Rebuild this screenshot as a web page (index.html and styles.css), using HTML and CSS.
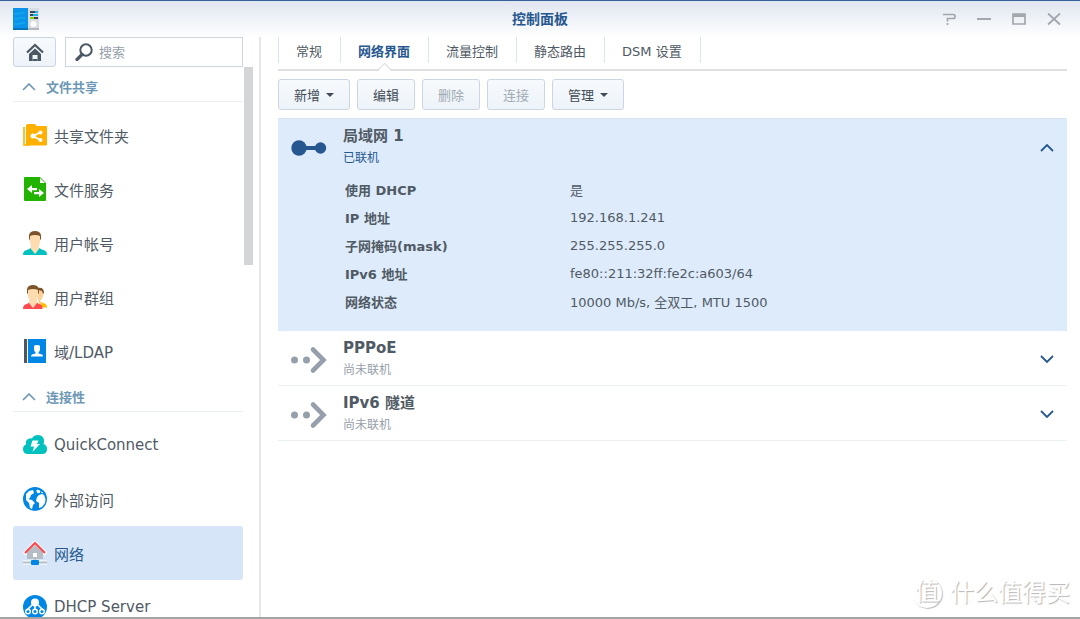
FILE: index.html
```html
<!DOCTYPE html>
<html lang="zh-CN">

<head>
    <meta charset="UTF-8">
    <meta name="viewport" content="width=device-width, initial-scale=1.0">
    <title>控制面板</title>
    <link rel="stylesheet" href="styles.css">
</head>

<body>
    <div class="window">
        <header class="titlebar">
            <svg class="app-icon" width="26" height="22" viewBox="0 0 26 22">
                <rect x="13" y="0" width="13" height="22" fill="#d9dde1" />
                <rect x="15" y="20" width="11" height="2" fill="#b3b9be" />
                <rect x="0" y="0" width="15" height="22" fill="#0a93e8" />
                <rect x="0" y="20" width="15" height="2" fill="#0675bd" />
                <path d="M1 6h4l1-1h6M1 11h4l1-1h6M1 16h5l1-1h5" fill="none" stroke="#12b4f0" />
                <path d="M17 4h5M17 7h3M21 10h4" stroke="#3c464f" stroke-width="2" />
                <path d="M22 4h3M20 7h5" stroke="#18b5ea" stroke-width="2" />
                <path d="M17 10h4" stroke="#7bd500" stroke-width="2" />
                <circle cx="20.500" cy="16" r="3" fill="#fff" />
            </svg>
            <h1 class="window-title">控制面板</h1>
            <div class="window-btns">
                <button type="button" aria-label="帮助">
                    <svg width="14" height="14" viewBox="0 0 14 14">
                        <path d="M1 2.500h10q2 0 2 1.500v1q0 1.500-2 1.500H5.500v3M5.500 11v2" fill="none" stroke="#a2a7ae" stroke-width="1.700" />
                    </svg>
                </button>
                <button type="button" aria-label="最小化">
                    <svg width="14" height="14" viewBox="0 0 14 14">
                        <path d="M0 7h14" stroke="#a2a7ae" stroke-width="2" />
                    </svg>
                </button>
                <button type="button" aria-label="最大化">
                    <svg width="14" height="14" viewBox="0 0 14 14">
                        <path d="M1 2h12v10H1z" fill="none" stroke="#a2a7ae" stroke-width="1.700" />
                        <path d="M1 3.500h12" stroke="#a2a7ae" stroke-width="3" />
                    </svg>
                </button>
                <button type="button" aria-label="关闭">
                    <svg width="14" height="14" viewBox="0 0 14 14">
                        <path d="M1 1.500l12 11M13 1.500l-12 11" stroke="#a2a7ae" stroke-width="1.700" />
                    </svg>
                </button>
            </div>
        </header>

        <div class="main">
            <aside class="sidebar">
                <div class="search-row">
                    <button type="button" class="home-btn" aria-label="主页">
                        <svg width="18" height="18" viewBox="0 0 18 18">
                            <path d="M1 9.500L9 2l8 7.500" fill="none" stroke="#4b5763" stroke-width="2.200" />
                            <path d="M3 11l6-5.600L15 11v7h-3.500v-6h-5v6H3z" fill="#4b5763" />
                            <path d="M6.500 17h5" stroke="#4b5763" stroke-width="2" />
                        </svg>
                    </button>
                    <div class="search-box">
                        <label for="search" aria-label="搜索">
                            <svg width="18" height="18" viewBox="0 0 18 18">
                                <circle cx="11" cy="7" r="5.700" fill="none" stroke="#4b5763" stroke-width="2" />
                                <path d="M7 11.500L2 16.500" stroke="#4b5763" stroke-width="3.200" stroke-linecap="round" />
                            </svg>
                        </label>
                        <input type="text" id="search" placeholder="搜索">
                    </div>
                </div>

                <div class="nav-scroll">
                    <nav class="nav-list">
                        <div class="nav-group">
                            <h2 class="nav-title">
                                <svg width="14" height="8" viewBox="0 0 14 8">
                                    <path d="M1 7l6-6 6 6" fill="none" stroke="#6d97b5" stroke-width="1.600" />
                                </svg>
                                文件共享
                            </h2>
                            <a href="#" class="nav-item">
                                <svg width="24" height="24" viewBox="0 0 24 24">
                                    <path d="M1 4v18h5" fill="none" stroke="#ffb000" stroke-width="1.600" />
                                    <path d="M3 2.500l1-1.500h8l1.500 2H23q1 0 1 1v17.500q0 1-1 1H3z" fill="#ffb000" />
                                    <path d="M18 9l-8 4 8 4.500" fill="none" stroke="#fff" stroke-width="1.600" />
                                    <g fill="#fff">
                                        <circle cx="10" cy="13" r="2.500" />
                                        <circle cx="17.500" cy="9.500" r="2" />
                                        <circle cx="17.500" cy="17" r="2" />
                                    </g>
                                </svg>
                                共享文件夹
                            </a>
                            <a href="#" class="nav-item">
                                <svg width="24" height="24" viewBox="0 0 24 24">
                                    <path d="M2 0h15l6 6v17q0 1-1 1H2q-1 0-1-1V1q0-1 1-1z" fill="#22b400" />
                                    <path d="M17 1v5h5z" fill="#fff" />
                                    <path d="M4 12l5-4v3h5v2.200H9V16zM21 16l-5-4v3h-5v2.200h5V20z" fill="#fff" />
                                </svg>
                                文件服务
                            </a>
                            <a href="#" class="nav-item">
                                <svg width="24" height="24" viewBox="0 0 24 24">
                                    <path d="M0 24q0-4.500 4-5l4-2h8l4 2q4 .500 4 5z" fill="#00c1c1" />
                                    <path d="M8 13h8v5l-4 5-4-5z" fill="#ffdcb0" />
                                    <path d="M6.500 5q-.500 11 5.500 11T17.500 5l-3-2h-5z" fill="#ffdcb0" />
                                    <path d="M6 9V4q1-4 6-4t6 4v5l-1-1V5q-5-2-10 0v3z" fill="#7d532b" />
                                </svg>
                                用户帐号
                            </a>
                            <a href="#" class="nav-item">
                                <svg width="24" height="24" viewBox="0 0 24 24">
                                    <path d="M16 22.500V16l4 2q4 .500 4 4.500z" fill="#ffbc00" />
                                    <path d="M14 4q6-1 6.500 3-.500 8-4.500 9.500l3 2-3 3z" fill="#ffd097" />
                                    <path d="M15 3q6-1 6 5l-1 1-1-3-4-1z" fill="#7d532b" />
                                    <path d="M0 24q0-4.500 4-5l3-2h6l3 2q3.500.500 3.500 5z" fill="#fb4a50" />
                                    <path d="M6 13h8v5l-4 5-4-5z" fill="#ffdcb0" />
                                    <path d="M4.500 5q-.500 11 5.500 11T15.500 5l-3-2h-5z" fill="#ffdcb0" />
                                    <path d="M4 9V4q1-4 6-4t6 4v5l-1-1V5Q10 3 5 5v3z" fill="#7d532b" />
                                </svg>
                                用户群组
                            </a>
                            <a href="#" class="nav-item">
                                <svg width="24" height="24" viewBox="0 0 24 24">
                                    <path d="M1 0h3v24H1z" fill="#4b5763" />
                                    <path d="M5 0h18v24H5z" fill="#0086e5" />
                                    <path d="M11 7q.500-1 3-1t3 1v3q0 2.500-1.500 3.500v1l3.500 1q1 .500 1 2H8q0-1.500 1-2l3.500-1v-1Q11 12.500 11 10z" fill="#fff" />
                                </svg>
                                域/LDAP
                            </a>
                        </div>

                        <div class="nav-group">
                            <h2 class="nav-title">
                                <svg width="14" height="8" viewBox="0 0 14 8">
                                    <path d="M1 7l6-6 6 6" fill="none" stroke="#6d97b5" stroke-width="1.600" />
                                </svg>
                                连接性
                            </h2>
                            <a href="#" class="nav-item">
                                <svg width="24" height="24" viewBox="0 0 24 24">
                                    <path d="M5 21q-5 0-5-5 0-3.500 3-4.500-1-5 3.500-6Q8 5 9 5.500 10.500 2 15 2q6 0 6 6.500 0 1-.500 2.500 3.500 1 3.500 5 0 5-5 5z" fill="#00c1bd" />
                                    <path d="M9.500 7.500h6L14 11h3l-7.500 8 1.500-5.500H7.500z" fill="#fff" />
                                </svg>
                                QuickConnect
                            </a>
                            <a href="#" class="nav-item">
                                <svg width="24" height="24" viewBox="0 0 24 24">
                                    <circle cx="12" cy="12" r="12" fill="#0086e5" />
                                    <path d="M3 7l3-3 4-1 1 3-3 2-1 3-2 1 4 1 3 3-2 2-1 4-2-1-1-5-3-3V9z" fill="#fff" />
                                    <path d="M14 10l2-2 3-1 2 1 1.500 4-.500 4-3 4-3 1v-5l-3-2z" fill="#fff" />
                                    <path d="M14 3l3 1-1 2-2-1zM18 5l2 1" fill="#fff" stroke="#fff" />
                                </svg>
                                外部访问
                            </a>
                            <a href="#" class="nav-item active">
                                <svg width="24" height="24" viewBox="0 0 24 24">
                                    <path d="M0 21.500h24" stroke="#fff" stroke-width="4" />
                                    <path d="M1 13L12 2l11 11" fill="none" stroke="#fff" stroke-width="4" />
                                    <path d="M4 11l8-7 8 7v7H4z" fill="#b5bdc5" />
                                    <path d="M10 12h4v4h-4z" fill="#fff" />
                                    <path d="M12 18v3M0 21.500h24" stroke="#b5bdc5" stroke-width="2" />
                                    <path d="M2 12L12 2l10 10" fill="none" stroke="#fb4a50" stroke-width="2.200" />
                                    <rect x="8" y="19" width="8" height="5" rx="1" fill="#0086e5" />
                                </svg>
                                网络
                            </a>
                            <a href="#" class="nav-item">
                                <svg width="24" height="24" viewBox="0 0 24 24">
                                    <circle cx="12" cy="12" r="12" fill="#0086e5" />
                                    <circle cx="12" cy="7.500" r="4" fill="#fff" />
                                    <path d="M12 10v5M9 10l-5 5M15 10l5 5" stroke="#fff" stroke-width="1.600" />
                                    <g fill="none" stroke="#fff" stroke-width="1.400">
                                        <circle cx="5" cy="16.500" r="2.300" />
                                        <circle cx="12" cy="16.500" r="2.300" />
                                        <circle cx="19" cy="16.500" r="2.300" />
                                    </g>
                                </svg>
                                DHCP Server
                            </a>
                        </div>
                    </nav>
                    <div class="scroll-thumb"></div>
                </div>
            </aside>

            <section class="content">
                <div class="tabs">
                    <button type="button" class="tab">常规</button>
                    <button type="button" class="tab active">网络界面</button>
                    <button type="button" class="tab">流量控制</button>
                    <button type="button" class="tab">静态路由</button>
                    <button type="button" class="tab">DSM 设置</button>
                </div>

                <div class="toolbar">
                    <button type="button" class="btn">新增<span class="caret"></span></button>
                    <button type="button" class="btn">编辑</button>
                    <button type="button" class="btn" disabled>删除</button>
                    <button type="button" class="btn" disabled>连接</button>
                    <button type="button" class="btn">管理<span class="caret"></span></button>
                </div>

                <div class="card open">
                    <div class="card-head">
                        <svg width="36" height="28" viewBox="0 0 36 28">
                            <path d="M8 14h22" stroke="#26588f" stroke-width="4" />
                            <circle cx="8" cy="14" r="7.700" fill="#26588f" />
                            <circle cx="29.500" cy="14" r="5.700" fill="#26588f" />
                        </svg>
                        <div class="card-text">
                            <h3>局域网 1</h3>
                            <p>已联机</p>
                        </div>
                        <button type="button" class="toggle" aria-label="收起">
                            <svg width="14" height="9" viewBox="0 0 14 9">
                                <path d="M1 8l6-6 6 6" fill="none" stroke="#26588f" stroke-width="1.800" />
                            </svg>
                        </button>
                    </div>
                    <table class="info">
                        <tr>
                            <th scope="row">使用 DHCP</th>
                            <td>是</td>
                        </tr>
                        <tr>
                            <th scope="row">IP 地址</th>
                            <td>192.168.1.241</td>
                        </tr>
                        <tr>
                            <th scope="row">子网掩码(mask)</th>
                            <td>255.255.255.0</td>
                        </tr>
                        <tr>
                            <th scope="row">IPv6 地址</th>
                            <td>fe80::211:32ff:fe2c:a603/64</td>
                        </tr>
                        <tr>
                            <th scope="row">网络状态</th>
                            <td>10000 Mb/s, 全双工, MTU 1500</td>
                        </tr>
                    </table>
                </div>

                <div class="card">
                    <div class="card-head">
                        <svg width="36" height="28" viewBox="0 0 36 28">
                            <circle cx="3.500" cy="14" r="3.500" fill="#96a0ac" />
                            <circle cx="15.500" cy="14" r="3.500" fill="#96a0ac" />
                            <path d="M22 3.500L32.500 14 22 24.500" fill="none" stroke="#96a0ac" stroke-width="4.600" stroke-linecap="round" />
                        </svg>
                        <div class="card-text">
                            <h3>PPPoE</h3>
                            <p>尚未联机</p>
                        </div>
                        <button type="button" class="toggle" aria-label="展开">
                            <svg width="14" height="9" viewBox="0 0 14 9">
                                <path d="M1 1l6 6 6-6" fill="none" stroke="#26588f" stroke-width="1.800" />
                            </svg>
                        </button>
                    </div>
                </div>

                <div class="card">
                    <div class="card-head">
                        <svg width="36" height="28" viewBox="0 0 36 28">
                            <circle cx="3.500" cy="14" r="3.500" fill="#96a0ac" />
                            <circle cx="15.500" cy="14" r="3.500" fill="#96a0ac" />
                            <path d="M22 3.500L32.500 14 22 24.500" fill="none" stroke="#96a0ac" stroke-width="4.600" stroke-linecap="round" />
                        </svg>
                        <div class="card-text">
                            <h3>IPv6 隧道</h3>
                            <p>尚未联机</p>
                        </div>
                        <button type="button" class="toggle" aria-label="展开">
                            <svg width="14" height="9" viewBox="0 0 14 9">
                                <path d="M1 1l6 6 6-6" fill="none" stroke="#26588f" stroke-width="1.800" />
                            </svg>
                        </button>
                    </div>
                </div>
            </section>
        </div>

        <div class="watermark">
            <span class="mark">值</span>
            <span>什么值得买</span>
        </div>
    </div>
</body>

</html>
```
FILE: styles.css
```css
* {
    box-sizing: border-box;
}

body {
    margin: 0;
    font-family: "DejaVu Sans", "Noto Sans CJK SC", sans-serif;
    font-size: 13px;
    color: #505a64;
}

h1,
h2,
h3,
p {
    margin: 0;
}

a {
    text-decoration: none;
}

button {
    padding: 0;
    border: 0;
    background: none;
    font: inherit;
    color: inherit;
    cursor: pointer;
}

svg {
    display: block;
    flex: none;
}

.window {
    position: relative;
    height: 100vh;
    display: flex;
    flex-direction: column;
    overflow: hidden;
    background: linear-gradient(#e0e6f0, #fff 37px);
    border-top: 1px solid #34609c;
    border-bottom: 2px solid #a2a4a4;
}

/* 標題列 */
.titlebar {
    flex: none;
    height: 36px;
    padding: 0 13px;
    display: grid;
    grid-template-columns: 1fr auto 1fr;
    align-items: center;
}

.window-title {
    font-size: 14px;
    line-height: 20px;
    color: #26588f;
}

.window-btns {
    padding-right: 6px;
    display: flex;
    justify-content: flex-end;
    gap: 21px;
}

.main {
    flex: 1;
    min-height: 0;
    display: flex;
}

/* 左側選單 */
.sidebar {
    flex: none;
    width: 261px;
    padding-left: 13px;
    display: flex;
    flex-direction: column;
    border-right: 2px solid #e4e6e8;
}

.search-row {
    flex: none;
    width: 230px;
    display: flex;
    gap: 9px;
}

.home-btn {
    flex: none;
    width: 43px;
    height: 30px;
    display: flex;
    align-items: center;
    justify-content: center;
    border: 1px solid #ccd6e2;
    border-radius: 3px;
    background: linear-gradient(#f7fafd, #edf3f9);
}

.search-box {
    flex: 1;
    min-width: 0;
    height: 30px;
    padding-left: 9px;
    display: flex;
    align-items: center;
    gap: 6px;
    border: 1px solid #ccd6e2;
    background-color: #fff;
}

.search-box input {
    flex: 1;
    min-width: 0;
    padding: 0;
    border: 0;
    outline: 0;
    background: none;
    font: inherit;
}

.search-box input::placeholder {
    color: #96a0aa;
}

.nav-scroll {
    flex: 1;
    min-height: 0;
    display: flex;
    gap: 1px;
    overflow: hidden;
}

.nav-list {
    width: 230px;
    padding-top: 5px;
}

.scroll-thumb {
    width: 9px;
    height: 198px;
    background-color: #d3d5d7;
}

.nav-group {
    margin-bottom: 4px;
}

.nav-title {
    height: 30px;
    margin-bottom: 6px;
    padding-left: 9px;
    display: flex;
    align-items: center;
    gap: 10px;
    border-bottom: 1px solid #ebf0f5;
    font-size: 13px;
    color: #6d97b5;
}

.nav-item {
    height: 54px;
    padding-left: 10px;
    display: flex;
    align-items: center;
    gap: 7px;
    border-radius: 3px;
    font-size: 15px;
    color: #505a64;
}

.nav-item.active {
    background-color: #d6e6f8;
    color: #26588f;
}

/* 右側內容 */
.content {
    flex: 1;
    min-width: 0;
    padding: 0 13px 0 17px;
}

.tabs {
    height: 34px;
    display: flex;
    align-items: flex-start;
    border-bottom: 2px solid #e0e0e0;
}

.tab {
    position: relative;
    height: 26px;
    padding: 0 18px 0 17px;
    border-left: 1px solid #dce6f0;
}

.tab:last-child {
    border-right: 1px solid #dce6f0;
}

.tab.active {
    font-weight: bold;
    color: #26588f;
}

/* 頁籤下方的小三角 */
.tab.active::after {
    content: "";
    position: absolute;
    left: 50%;
    top: 28px;
    width: 10px;
    height: 10px;
    margin-left: -6px;
    background: linear-gradient(135deg, #fff 50%, transparent 50%);
    border-left: 1px solid #dcdcdc;
    border-top: 1px solid #dcdcdc;
    transform: rotate(45deg);
}

.toolbar {
    padding: 8px 0;
    display: flex;
    gap: 7px;
}

.btn {
    height: 31px;
    padding: 0 15px;
    display: flex;
    align-items: center;
    gap: 6px;
    border: 1px solid #ccd6e2;
    border-radius: 3px;
    background: linear-gradient(#f7fafd, #edf3f9);
    color: #414b55;
}

.btn:disabled {
    color: #a0aab4;
}

.caret {
    width: 8px;
    border: 4px solid transparent;
    border-top-color: #414b55;
    border-bottom: 0;
}

.card {
    border-bottom: 1px solid #ebf0f5;
}

.card.open {
    padding-bottom: 15px;
    border-top: 1px solid #d5e2f0;
    border-bottom-color: #deebfb;
    background-color: #deebfb;
}

.card-head {
    padding: 6px 13px 3px;
    display: flex;
    align-items: center;
    gap: 16px;
}

.card-text {
    flex: 1;
}

.card-text h3 {
    font-size: 15px;
    line-height: 22px;
}

.card-text p {
    font-size: 12px;
    line-height: 23px;
    color: #96a0aa;
}

.card.open .card-text p {
    color: #26588f;
}

.info {
    margin: 2px 0 0 67px;
    border-collapse: collapse;
}

.info th,
.info td {
    height: 28px;
    padding: 0;
    text-align: left;
}

.info th {
    width: 225px;
}

/* 浮水印 */
.watermark {
    position: absolute;
    right: 10px;
    bottom: 8px;
    display: flex;
    align-items: center;
    gap: 8px;
    font-size: 24px;
    line-height: 32px;
    color: #fff;
    text-shadow: 1px 1px 1px #b4b4b4;
}

.mark {
    width: 30px;
    height: 30px;
    border-radius: 50%;
    box-shadow: 1px 1px 1px #c0c0c0;
    line-height: 28px;
    text-align: center;
}
```
